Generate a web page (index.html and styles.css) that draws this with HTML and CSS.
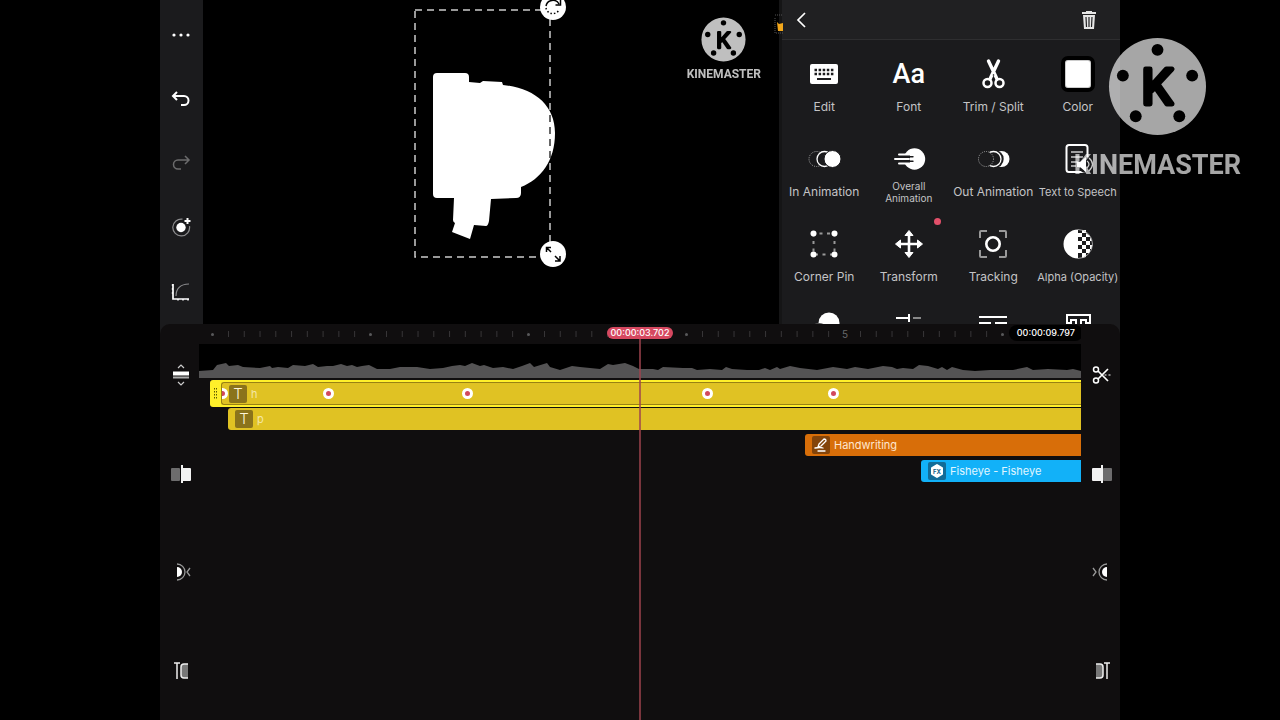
FILE: index.html
```html
<!DOCTYPE html>
<html lang="en">
    <head>
        <meta charset="utf-8">
        <meta name="viewport" content="width=device-width, initial-scale=1.0">
        <title>Video editor</title>
        <link rel="stylesheet" href="styles.css">
    </head>
    <body>
        <main class="app">
            <div class="top">
                <nav class="toolbar">
                    <button aria-label="More"><svg width="20" height="20"><g fill="#fff"><circle cx="3" cy="10" r="1.600"/><circle cx="10" cy="10" r="1.600"/><circle cx="17" cy="10" r="1.600"/></g></svg></button>
                    <button aria-label="Undo"><svg width="20" height="20" class="line"><path d="M6 3 2 7l4 4M2 7h11a4.500 4.500 0 0 1 0 9h-3"/></svg></button>
                    <button aria-label="Redo" disabled><svg width="20" height="20" class="line thin"><path d="m14 3 4 4-4 4M18 7H7a4.500 4.500 0 0 0 0 9h3"/></svg></button>
                    <button aria-label="Add keyframe"><svg width="20" height="20" class="line"><circle cx="10" cy="9.500" r="4.700" fill="#fff" stroke="none"/><path d="M11.500 1.200a8.400 8.400 0 1 0 7 7" stroke="#8b8b8d" stroke-width="1.200"/><path d="M16.500 0v6M13.500 3h6"/></svg></button>
                    <button aria-label="Animation curve"><svg width="20" height="20" class="line"><path d="M2 2v15h16" stroke-width="1.700"/><path d="M.8 3H2M.8 7H2M.8 11H2M7 17v1.500M12 17v1.500M17 17v1.500" stroke-width="1.500"/><path d="M5 14C5 7 9 2 18 2" stroke="#8b8b8d" stroke-width="1.200"/></svg></button>
                </nav>
                <section class="preview">
                    <svg class="artwork" width="576" height="324"><path fill="#fff" d="M230 77q0-4 4-4h28q4 0 4 4v5l11 1 3-2 19 1 1 3C331 88 352 105 352 133 352 161 338 179 318 187v6q0 5-5 5l-25 1-2 22q-1 5-3 5l-12-1-4 14-18-7 3-9q-2-1-2-3l1-22h-17q-4 0-4-4z"/></svg>
                    <svg class="selection" width="137" height="250"><rect x="1" y="1" width="135" height="247"/></svg>
                    <button class="handle handle--rotate" aria-label="Rotate"><svg width="26" height="26"><g fill="none" stroke="#000" stroke-width="1.500"><path d="M6 12a7 7 0 0 1 13-2M20.500 6v5h-5"/><path d="M6 14a7 7 0 0 0 13 2" stroke-dasharray="1.500 2"/></g></svg></button>
                    <button class="handle handle--scale" aria-label="Scale"><svg width="26" height="26"><path fill="none" stroke="#000" stroke-width="1.500" d="M11 11 7 7M6.500 11V6.500H11M15 15l4.500 4.500M15 20h5v-5"/></svg></button>
                    <div class="watermark watermark--small">
                        <svg class="watermark__logo" viewBox="0 0 100 100"><circle cx="50" cy="50" r="49" fill="#fff"/><circle cx="50" cy="13" r="6"/><circle cx="15" cy="39" r="6"/><circle cx="85" cy="39" r="6"/><circle cx="28" cy="80" r="6"/><circle cx="72" cy="80" r="6"/><text x="50" y="68" text-anchor="middle">K</text></svg>
                        <span>KINEMASTER</span>
                    </div>
                    <svg class="crown" width="9" height="22"><path d="M1 5v15h8M1 2h8" fill="none" stroke="#555" stroke-dasharray="1 1"/><path fill="#f2a71b" d="m3 9 2 2 4-1v8H4z"/></svg>
                </section>
                <section class="panel">
                    <header class="panel__header">
                        <button aria-label="Back"><svg width="12" height="20" class="line"><path d="m10 3-7 7 7 7" stroke-width="1.700"/></svg></button>
                        <button aria-label="Delete"><svg width="16" height="20"><path fill="#e6e6e6" d="M5 1h6v1h4v2H1V2h4zM2 5h12l-1 14H3z"/><path stroke="#202022" stroke-width="1.200" d="m5 7 .5 10M8 7v10M11 7l-.5 10"/></svg></button>
                    </header>
                    <div class="options">
                        <button class="option"><svg class="option__icon" viewBox="0 0 36 36"><rect x="4" y="8" width="28" height="20" rx="2" fill="#fff"/><path stroke="#1b1b1d" stroke-width="2.400" stroke-dasharray="2.500 1.600" d="M8.500 14h19M8.500 18h19"/><path stroke="#1b1b1d" stroke-width="2" d="M11 23h14"/></svg><span>Edit</span></button>
                        <button class="option"><span class="option__icon option__icon--text">Aa</span><span>Font</span></button>
                        <button class="option"><svg class="option__icon" viewBox="0 0 36 36"><g fill="none" stroke="#fff"><circle cx="12.500" cy="27" r="4" stroke-width="2.500"/><circle cx="24.500" cy="27" r="4" stroke-width="2.500"/><path stroke-width="3.400" stroke-linecap="round" d="m13.500 5 8.500 18M23.500 5 15 23"/></g><circle cx="18.500" cy="19" r=".8"/></svg><span>Trim / Split</span></button>
                        <button class="option"><span class="option__icon option__icon--color"></span><span>Color</span></button>

                        <button class="option"><svg class="option__icon" viewBox="0 0 36 36"><circle cx="10.500" cy="18" r="7.500" fill="none" stroke="#aaa" stroke-dasharray="1 1.200"/><circle cx="18.500" cy="18" r="7.500" fill="#1b1b1d" stroke="#fff" stroke-width="1.300"/><circle cx="26.500" cy="18" r="8.500" fill="#fff" stroke="#1b1b1d"/></svg><span>In Animation</span></button>
                        <button class="option option--tiny"><svg class="option__icon" viewBox="0 0 36 36"><circle cx="23.500" cy="18" r="10.700" fill="#fff"/><path stroke="#1b1b1d" stroke-width="4.500" d="M11 16h8M11 20h8"/><path stroke="#fff" stroke-width="2" stroke-linecap="round" d="M8 13.500h12M4 18h14M8 22.500h12"/><path stroke="#1b1b1d" stroke-width="1.400" stroke-linecap="round" d="M14 15.700h8M14 20.300h8"/></svg><span>Overall<br>Animation</span></button>
                        <button class="option"><svg class="option__icon" viewBox="0 0 36 36"><circle cx="26.500" cy="18" r="8" fill="#fff"/><circle cx="20" cy="18" r="8.700" fill="#1b1b1d"/><circle cx="18.500" cy="18" r="7.500" fill="#1b1b1d" stroke="#fff" stroke-width="1.300"/><circle cx="11" cy="18" r="7.500" fill="#1b1b1d" stroke="#aaa" stroke-dasharray="1 1.200"/></svg><span>Out Animation</span></button>
                        <button class="option option--small"><svg class="option__icon" viewBox="0 0 36 36"><g fill="none" stroke="#fff"><rect x="6.500" y="4" width="21" height="27" rx="2.500" stroke-width="2"/><path stroke="#ccc" stroke-width="1.300" d="M11 11h12M11 16h12M11 21h7M11 25h5"/></g><circle cx="26" cy="24" r="8" fill="#1b1b1d"/><path fill="#fff" d="M17 21h3l6-5v15l-6-5h-3z"/><path fill="none" stroke="#ccc" stroke-width="1.300" d="M27 20q4 3 0 7M29 17q7 6 0 13"/></svg><span>Text to Speech</span></button>

                        <button class="option"><svg class="option__icon" viewBox="0 0 36 36"><rect x="7.500" y="7.500" width="21" height="21" fill="none" stroke="#999" stroke-width="2" stroke-dasharray="3 4.500" stroke-dashoffset="-6"/><g fill="#fff"><circle cx="7.500" cy="7.500" r="3"/><circle cx="28.500" cy="7.500" r="3"/><circle cx="7.500" cy="28.500" r="3"/><circle cx="28.500" cy="28.500" r="3"/></g></svg><span>Corner Pin</span></button>
                        <button class="option option--new"><svg class="option__icon" viewBox="0 0 36 36"><path stroke="#fff" stroke-width="2.600" d="M18 7v22M7 18h22"/><path fill="#fff" stroke="#fff" stroke-linejoin="round" d="m18 4.500 4 5h-8zM18 31.500l4-5h-8zM4.500 18l5-4v8zM31.500 18l-5-4v8z"/></svg><span>Transform</span></button>
                        <button class="option"><svg class="option__icon" viewBox="0 0 36 36"><g fill="none"><circle cx="18" cy="18" r="6.700" stroke="#fff" stroke-width="2.600"/><path stroke="#999" stroke-width="2" d="M5 12V6q0-1 1-1h6M24 5h6q1 0 1 1v6M31 24v6q0 1-1 1h-6M12 31H6q-1 0-1-1v-6"/></g></svg><span>Tracking</span></button>
                        <button class="option option--small"><svg class="option__icon" viewBox="0 0 36 36"><path fill="#fff" d="M18 3.500a14.500 14.500 0 0 0 0 29zM22 4h4v3h-4zM18 7h4v4h-4zM26 7l4 3v1h-4zM22 11h4v4h-4zM30 11l2 4h-2zM18 15h4v4h-4zM26 15h4v4h-4zM22 19h4v4h-4zM30 19h2.500l-1 4H30zM18 23h4v4h-4zM26 23h4v3l-1 1h-3zM22 27h4v4l-4 1z"/><path fill="none" stroke="#bbb" stroke-width=".8" d="M18 3.500a14.500 14.500 0 0 1 0 29"/></svg><span>Alpha (Opacity)</span></button>

                        <button class="option" aria-label="Blending"><svg class="option__icon" viewBox="0 0 36 36"><circle cx="23" cy="12" r="10.500" fill="#fff"/><circle cx="13" cy="22" r="9" fill="none" stroke="#555" stroke-width="2"/></svg></button>
                        <button class="option" aria-label="Align"><svg class="option__icon" viewBox="0 0 36 36"><path stroke="#fff" stroke-width="2" d="M5 7h13M18 3v8"/><path stroke="#888" stroke-width="2" d="M22 7h8"/></svg></button>
                        <button class="option" aria-label="Paragraph"><svg class="option__icon" viewBox="0 0 36 36"><path stroke="#fff" stroke-width="2" d="M4 6h28M4 12h12M20 12h12"/></svg></button>
                        <button class="option" aria-label="Outline"><svg class="option__icon" viewBox="0 0 36 36"><path fill="none" stroke="#fff" stroke-width="2" d="M7 4h23v8h-4V9h-5v18h-5V9h-5v3H7z"/></svg></button>
                    </div>
                </section>
            </div>

            <div class="timeline">
                <nav class="rail rail--left">
                    <button aria-label="Track height"><svg width="20" height="22" class="line"><path d="m7 4 3-3 3 3M7 18l3 3 3-3" stroke="#ccc" stroke-width="1.200"/><path d="M2 9.500h16" stroke-width="4"/><path d="M2 13.500h16" stroke="#aaa" stroke-width="2"/></svg></button>
                    <button aria-label="Trim to left"><svg width="20" height="20"><rect x="0" y="4" width="9" height="13" rx="1" fill="#6d6c6d"/><path fill="#f2f2f2" d="M10 1h2v3h7q1 0 1 1v11q0 1-1 1h-7v2h-2z"/></svg></button>
                    <button aria-label="Previous keyframe"><svg width="20" height="20"><path fill="#fff" d="M6 5a5 5 0 0 1 0 10z"/><path fill="none" stroke="#999" stroke-width="1.300" d="M6 2a8 8 0 0 1 0 16M19 6l-3 4 3 4"/></svg></button>
                    <button aria-label="Jump to start"><svg width="20" height="20"><path stroke="#eee" stroke-width="1.500" d="M3 2h6M6 2v16"/><path fill="#777" stroke="#eee" stroke-width="1.500" d="M17 3h-4q-3 0-3 3v8q0 3 3 3h4"/></svg></button>
                </nav>
                <div class="tracks">
                    <div class="ruler">
                        <div class="ruler__second"></div>
                        <div class="ruler__second"></div>
                        <div class="ruler__second"></div>
                        <div class="ruler__second"></div>
                        <div class="ruler__second ruler__second--number">5</div>
                        <div class="ruler__second"></div>
                        <span class="timecode timecode--total">00:00:09.797</span>
                    </div>
                    <svg class="audio" viewBox="0 0 882 34" preserveAspectRatio="none"><path fill="#545354" d="M0 34V27L14 26 18 21 27 19 30 22 39 21 44 23 61 24 71 22 73 24 79 23 89 24 94 21 106 22 114 20 119 23 128 22 134 22 142 20 148 22 153 21 158 23 163 22 170 21 178 25 191 25 201 23 218 23 231 25 244 24 253 22 261 21 266 22 273 19 281 22 285 21 294 24 304 23 314 25 323 22 331 19 335 23 348 19 351 23 361 26 373 22 381 23 401 25 409 20 414 21 426 19 434 22 440 25 454 25 459 26 464 23 484 24 493 24 498 26 511 25 523 26 527 23 533 25 548 26 560 26 566 24 571 26 578 23 581 25 591 22 601 24 618 26 634 23 648 25 656 23 669 25 684 22 693 23 698 25 704 24 714 25 720 21 729 22 739 25 743 23 748 26 753 23 764 26 776 27 791 26 814 26 828 23 834 26 849 25 868 26 874 25 882 27V34z"/></svg>
                    <div class="clip clip--selected">
                        <svg class="clip__grip" width="11" height="23"><path stroke="#5d5a00" stroke-width="1" stroke-dasharray="1.500 1.500" d="M4.500 6v12M6.500 6v12"/></svg>
                        <div class="clip__body">
                            <i class="keyframe keyframe--1"></i>
                            <i class="keyframe keyframe--2"></i>
                            <i class="keyframe keyframe--3"></i>
                            <i class="keyframe keyframe--4"></i>
                            <i class="keyframe keyframe--5"></i>
                            <span class="clip__icon">T</span>
                            <span>h</span>
                        </div>
                    </div>
                    <div class="clip clip--text"><span class="clip__icon">T</span><span>p</span></div>
                    <div class="clip clip--handwriting"><svg class="clip__icon" viewBox="0 0 18 18"><path fill="none" stroke="#fff" stroke-width="1.300" stroke-linejoin="round" stroke-linecap="round" d="m7 8 5-5q2 0 2 2l-5 5-3 1zM3 12q5-1 8 0M6 15h7"/></svg><span>Handwriting</span></div>
                    <div class="clip clip--effect"><svg class="clip__icon" viewBox="0 0 18 18"><path fill="#fff" stroke="#fff" stroke-width="2" stroke-linejoin="round" d="m9 3 5 3v6l-5 3-5-3V6z"/><text x="9" y="11.500" text-anchor="middle">FX</text></svg><span>Fisheye - Fisheye</span></div>
                    <div class="playhead"><span class="timecode timecode--current">00:00:03.702</span></div>
                </div>
                <nav class="rail rail--right">
                    <button aria-label="Split"><svg width="20" height="20" class="line"><circle cx="4" cy="4.500" r="2.500" stroke-width="1.500"/><circle cx="4" cy="15.500" r="2.500" stroke-width="1.500"/><path d="m6 6 10 10M6 14 16 4" stroke-width="1.700"/><path d="M12.500 10H19" stroke-width="1.200" stroke-dasharray="2 2"/></svg></button>
                    <button aria-label="Trim to right"><svg width="20" height="20"><rect x="11" y="4" width="9" height="13" rx="1" fill="#6d6c6d"/><path fill="#f2f2f2" d="M10 1H9v3H1Q0 4 0 5v11q0 1 1 1h8v2h2V1z"/></svg></button>
                    <button aria-label="Next keyframe"><svg width="20" height="20"><path fill="#fff" d="M15 5a5 5 0 0 0 0 10z"/><path fill="none" stroke="#999" stroke-width="1.300" d="M15 2a8 8 0 0 0 0 16M1 6l3 4-3 4"/></svg></button>
                    <button aria-label="Jump to end"><svg width="20" height="20"><path stroke="#eee" stroke-width="1.500" d="M12 2h6M15 2v16"/><path fill="#777" stroke="#eee" stroke-width="1.500" d="M4 3h4q3 0 3 3v8q0 3-3 3H4"/></svg></button>
                </nav>
            </div>
        </main>

        <div class="watermark watermark--large">
            <svg class="watermark__logo" viewBox="0 0 100 100"><circle cx="50" cy="50" r="49" fill="#fff"/><circle cx="50" cy="13" r="6"/><circle cx="15" cy="39" r="6"/><circle cx="85" cy="39" r="6"/><circle cx="28" cy="80" r="6"/><circle cx="72" cy="80" r="6"/><text x="50" y="68" text-anchor="middle">K</text></svg>
            <span>KINEMASTER</span>
        </div>
    </body>
</html>
```
FILE: styles.css
```css
* {
    box-sizing: border-box;
}
body {
    margin: 0;
    background: #000;
    color: #c4c4c6;
    font-family: Inter, sans-serif;
    font-size: 12px;
    position: relative;
    overflow: hidden;
}
button {
    padding: 0;
    border: none;
    background: none;
    color: inherit;
    font: inherit;
    cursor: pointer;
}
svg {
    display: block;
}
.line {
    fill: none;
    stroke: #fff;
    stroke-width: 2;
}
.app {
    width: 75%;
    min-height: 100vh;
    margin: 0 auto;
    display: flex;
    flex-direction: column;
    background: #1b1b1d;
}

/* top half */
.top {
    height: 45vh;
    display: grid;
    grid-template-columns: 43px 1fr 341px;
}
.toolbar {
    display: grid;
    grid-auto-rows: 1fr;
    padding: 3px 1px 0 0;
}
.toolbar button,
.rail button {
    display: flex;
    align-items: center;
    justify-content: center;
}
.toolbar button:disabled {
    opacity: 0.35;
}
.thin {
    stroke-width: 1.5;
}
.preview {
    position: relative;
    z-index: 1;
    background: #000;
}
.artwork {
    position: absolute;
    left: 0;
    top: 0;
}
.selection {
    position: absolute;
    left: 211px;
    top: 9px;
    fill: none;
    stroke: #ccc;
    stroke-width: 1.5;
    stroke-dasharray: 7 5;
    mix-blend-mode: difference;
}
.handle {
    position: absolute;
    left: 337px;
    width: 26px;
    height: 26px;
    border-radius: 50%;
    background: #fff;
}
.handle--rotate {
    top: -6px;
}
.handle--scale {
    top: 241px;
}
.crown {
    position: absolute;
    right: -4px;
    top: 13px;
}

.watermark {
    position: absolute;
    z-index: 2;
    display: flex;
    flex-direction: column;
    align-items: center;
    color: #fff;
    font-family: Roboto, sans-serif;
    font-weight: 700;
    pointer-events: none;
}
.watermark__logo text {
    font-family: Inter, sans-serif;
    font-size: 48px;
    font-weight: 400;
    stroke: #000;
    stroke-width: 5;
    stroke-linejoin: round;
}
.watermark--small {
    right: 18px;
    top: 17px;
    gap: 5px;
    font-size: 12px;
    line-height: 14px;
    opacity: 0.75;
}
.watermark--small .watermark__logo {
    width: 45px;
}
.watermark--large {
    right: 39px;
    top: 37px;
    gap: 13px;
    font-size: 27px;
    line-height: 32px;
    opacity: 0.65;
}
.watermark--large .watermark__logo {
    width: 99px;
}

/* option panel */
.panel {
    display: flex;
    flex-direction: column;
    min-height: 0;
    border-left: 3px solid #151516;
}
.panel__header {
    flex: none;
    display: flex;
    align-items: center;
    justify-content: space-between;
    height: 40px;
    padding: 0 23px 0 13px;
    background: #202022;
    border-bottom: 1px solid #2e2e30;
}
.options {
    flex: 1;
    display: grid;
    grid-template-columns: repeat(4, 1fr);
    grid-auto-rows: 85px;
    overflow: hidden;
}
.option {
    position: relative;
    display: flex;
    flex-direction: column;
    align-items: center;
    gap: 7px;
    padding-top: 16px;
    line-height: 16px;
    white-space: nowrap;
}
.option--small {
    font-size: 11px;
}
.option--tiny {
    font-size: 10px;
    line-height: 12px;
    gap: 3px;
}
.option--new::after {
    content: "";
    position: absolute;
    right: 10px;
    top: 8px;
    width: 7px;
    height: 7px;
    border-radius: 50%;
    background: #e2506a;
}
.option__icon {
    flex: none;
    width: 36px;
    height: 36px;
}
.option__icon--text {
    color: #fff;
    font-size: 27px;
    font-weight: 500;
    line-height: 36px;
    font-family: Roboto, sans-serif;
}
.option__icon--color {
    width: 34px;
    margin: 0 1px;
    border: 4px solid #000;
    border-radius: 7px;
    background: #fff;
    box-shadow: inset 0 0 0 1px #ccc;
}

/* timeline */
.timeline {
    flex: 1;
    display: grid;
    grid-template-columns: 39px 1fr 39px;
    background: #100e0f;
    border-radius: 10px 10px 0 0;
}
.rail {
    display: grid;
    grid-auto-rows: 1fr;
    padding-top: 2px;
}
.rail--left {
    padding-left: 3px;
}
.rail--right {
    padding-left: 3px;
}
.tracks {
    position: relative;
    overflow: hidden;
}
.ruler {
    position: relative;
    display: flex;
    align-items: center;
    height: 20px;
    padding-left: 13px;
    overflow: hidden;
}
.ruler__second {
    flex: none;
    display: flex;
    align-items: center;
    width: 158px;
    color: #68686a;
    font-size: 10px;
}
.ruler__second::before {
    content: "";
    width: 3px;
    height: 3px;
    margin-left: -1px;
    border-radius: 50%;
    background: #59595b;
}
.ruler__second--number::before {
    display: none;
}
.ruler__second--number {
    text-indent: -2px;
}
.ruler__second::after {
    content: "";
    width: 90%;
    height: 6px;
    margin-left: auto;
    background: linear-gradient(90deg, #373537 1px, transparent 1px);
    background-size: calc(100% / 9) 100%;
}
.timecode {
    padding: 0 4px;
    border-radius: 6px;
    color: #fff;
    font-size: 9px;
    font-weight: 500;
    line-height: 12px;
}
.timecode--total {
    position: absolute;
    right: 0;
    top: 3px;
    padding: 0 6px;
    background: #000;
    box-shadow: 0 0 0 2px #000;
}
.audio {
    width: 100%;
    height: 34px;
    margin-bottom: 2px;
    background: #000;
}
.clip {
    display: flex;
    align-items: center;
    gap: 4px;
    height: 22px;
    margin-bottom: 4px;
    padding-left: 7px;
    border-radius: 3px 0 0 3px;
    color: #fff;
    font-size: 11px;
}
.clip__icon {
    flex: none;
    width: 18px;
    height: 18px;
    border-radius: 2px;
    background: #8a731b;
    color: #fff6d8;
    font-size: 15px;
    font-weight: 300;
    line-height: 18px;
    text-align: center;
}
.clip__icon text {
    font-size: 6px;
    font-weight: 700;
    fill: #126088;
}
.clip--selected {
    gap: 0;
    height: 27px;
    margin: 0 0 1px 11px;
    padding: 2px 0 2px 0;
    background: #fff02a;
}
.clip__grip {
    flex: none;
}
.clip__body {
    position: relative;
    flex: 1;
    display: flex;
    align-items: center;
    gap: 4px;
    height: 23px;
    padding-left: 7px;
    border: 1px solid #998114;
    border-right: none;
    border-radius: 3px 0 0 3px;
    background: #e0c223;
    color: #f3e6a6;
    overflow: hidden;
}
.clip--text {
    margin-left: 29px;
    background: #e0c223;
    color: #f3e6a6;
}
.clip--handwriting {
    margin-left: 606px;
    background: #d86e09;
    color: #ffe6cf;
}
.clip--handwriting .clip__icon {
    background: #84440a;
}
.clip--effect {
    margin-left: 722px;
    background: #12b1f8;
    color: #e0f6ff;
}
.clip--effect .clip__icon {
    background: #126c98;
}
.keyframe {
    position: absolute;
    top: 5px;
    width: 11px;
    height: 11px;
    border: 3px solid #fff;
    border-radius: 50%;
    background: #d2495c;
}
.keyframe--1 {
    left: -5px;
}
.keyframe--2 {
    left: 101px;
}
.keyframe--3 {
    left: 240px;
}
.keyframe--4 {
    left: 480px;
}
.keyframe--5 {
    left: 606px;
}
.playhead {
    position: absolute;
    left: 50%;
    top: 3px;
    bottom: 0;
    width: 2px;
    margin-left: -1px;
    display: flex;
    justify-content: center;
    align-items: flex-start;
    background: rgba(158, 67, 78, 0.75);
}
.timecode--current {
    background: #d64860;
}
```
